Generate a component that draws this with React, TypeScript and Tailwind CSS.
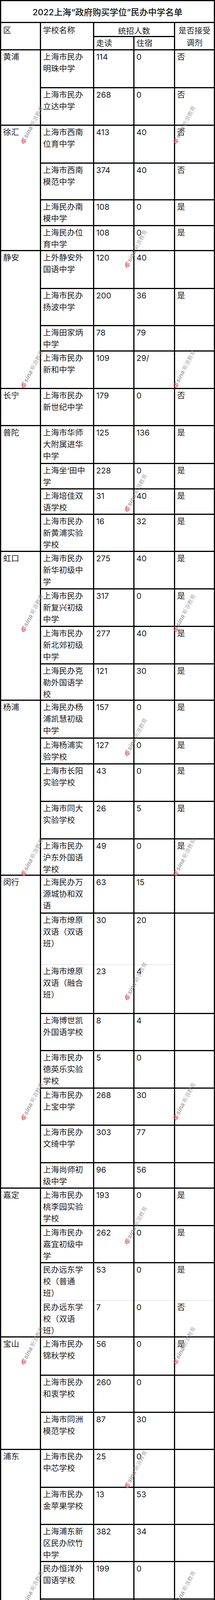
import React from "react";

type Row = { name: string; walk: string; board: string; adj: string; h: number };
type Pair = { pair: [Row, Row]; top: string; merge?: boolean };
type District = { name: string; span: string; rows: (Row | Pair)[] };

const r = (name: string, walk: string, board: string, adj: string, h: number): Row => ({ name, walk, board, adj, h });

const districts: District[] = [
  {
    name: "黄浦",
    span: "row-span-2",
    rows: [r("上海市民办\n明珠中学", "114", "0", "否", 94), r("上海市民办\n立达中学", "268", "0", "否", 93)],
  },
  {
    name: "徐汇",
    span: "row-span-4",
    rows: [
      r("上海市西南\n位育中学", "413", "40", "否", 94),
      r("上海市西南\n模范中学", "374", "40", "否", 91),
      r("上海民办南\n模中学", "108", "0", "是", 63),
      r("上海民办位\n育中学", "108", "0", "是", 61),
    ],
  },
  {
    name: "静安",
    span: "row-span-4",
    rows: [
      r("上外静安外\n国语中学", "120", "40", "", 94),
      r("上海市民办\n扬波中学", "200", "36", "是", 92),
      r("上海田家炳\n中学", "78", "79", "", 62),
      r("上海市民办\n新和中学", "109", "29/", "", 93),
    ],
  },
  { name: "长宁", span: "", rows: [r("上海市民办\n新世纪中学", "179", "0", "否", 92)] },
  {
    name: "普陀",
    span: "row-span-4",
    rows: [
      r("上海市华师\n大附属进华\n中学", "125", "136", "是", 94),
      r("上海坐‘田中\n学", "228", "0", "是", 62),
      r("上海培佳双\n语学校", "31", "40", "是", 62),
      r("上海市民办\n新黄浦实验\n学校", "16", "32", "是", 92),
    ],
  },
  {
    name: "虹口",
    span: "row-span-4",
    rows: [
      r("上海市民办\n新华初级中\n学", "275", "40", "是", 93),
      r("上海市民办\n新复兴初级\n中学", "317", "0", "是", 93),
      r("上海市民办\n新北郊初级\n中学", "277", "40", "是", 93),
      r("上海民办克\n勒外国语学\n校", "121", "30", "是", 90),
    ],
  },
  {
    name: "杨浦",
    span: "row-span-5",
    rows: [
      r("上海民办杨\n浦凯慧初级\n中学", "157", "0", "是", 94),
      r("上海杨浦实\n验学校", "127", "0", "是", 63),
      r("上海市长阳\n实验学校", "43", "0", "是", 93),
      r("上海市同大\n实验学校", "26", "5", "是", 93),
      r("上海市民办\n沪东外国语\n学校", "49", "0", "是", 90),
    ],
  },
  {
    name: "闵行",
    span: "row-span-7",
    rows: [
      r("上海民办万\n源城协和双\n语", "63", "15", "", 94),
      {
        pair: [
          r("上海市燎原\n双语（双语\n班）", "30", "20", "", 130),
          r("上海市燎原\n双语（融合\n班）", "23", "4", "", 124),
        ],
        top: "h-[130px]",
        merge: true,
      },
      r("上海博世凯\n外国语学校", "8", "4", "", 92),
      r("上海市民办\n德英乐实验\n学校", "5", "0", "", 93),
      r("上海市民办\n上宝中学", "268", "30", "", 92),
      r("上海市民办\n文绮中学", "303", "77", "", 93),
      r("上海尚师初\n级中学", "96", "56", "", 62),
    ],
  },
  {
    name: "嘉定",
    span: "row-span-3",
    rows: [
      r("上海市民办\n桃李园实验\n学校", "193", "0", "是", 93),
      r("上海市民办\n嘉宜初级中\n学", "262", "0", "是", 92),
      {
        pair: [
          r("民办远东学\n校（普通\n班）", "53", "0", "是", 95),
          r("民办远东学\n校（双语\n班）", "7", "0", "否", 92),
        ],
        top: "h-[95px]",
      },
    ],
  },
  {
    name: "宝山",
    span: "row-span-3",
    rows: [
      r("上海市民办\n锦秋学校", "56", "0", "是", 95),
      r("上海市民办\n和衷学校", "260", "0", "", 92),
      r("上海市同洲\n模范学校", "87", "30", "", 92),
    ],
  },
  {
    name: "浦东",
    span: "row-span-7",
    rows: [
      r("上海市民办\n中芯学校", "25", "0", "", 94),
      r("上海市民办\n金苹果学校", "13", "53", "", 92),
      r("上海浦东新\n区民办欣竹\n中学", "382", "34", "", 92),
      r("民办恒洋外\n国语学校", "199", "0", "", 93),
      r("上海民办浦\n东交中初级\n中学", "152", "0", "", 92),
      r("民办远翔实\n验学校", "197", "0", "", 61),
      r("民办进德外\n国语中学", "205", "0", "", 93),
    ],
  },
  {
    name: "松江",
    span: "row-span-2",
    rows: [
      r("上海市松江\n九峰实验学\n校", "252", "0", "", 94),
      r("上海市松江\n区民办茸一\n中学", "270", "0", "", 92),
    ],
  },
  {
    name: "金山",
    span: "row-span-3",
    rows: [
      r("上海市民办\n金盟学校", "70", "20", "是", 94),
      r("上海金山区\n健桥实验中\n学", "126", "20", "是", 92),
      r("上海市民办\n永昌中学", "30", "24", "是", 92),
    ],
  },
  {
    name: "青浦",
    span: "row-span-3",
    rows: [
      r("上海复旦五\n浦汇实验学\n校", "120", "52", "是", 94),
      r("上海青浦区\n世外学校", "19", "5", "否", 93),
      r("上海青浦兰\n生学校", "65", "35", "是", 61),
    ],
  },
  { name: "奉贤", span: "", rows: [r("无", "/", "/", "/", 30)] },
  { name: "崇明", span: "", rows: [r("无", "/", "/", "/", 29)] },
];

// row track sizes: title, two header rows, every body row, footnote
const trackList = [
  53,
  33,
  31,
  ...districts.flatMap((d) => d.rows.map((row) => ("pair" in row ? row.pair[0].h + row.pair[1].h : row.h))),
  32,
];
const gridRows = trackList.map((n) => `${n}px`).join(" ");

const cell = "min-h-0 overflow-hidden bg-white pl-[5px] pt-[2px] leading-[30px]";
const sub = "overflow-hidden pl-[5px] pt-[2px] leading-[30px]";

function RowCells({ row }: { row: Row }) {
  return (
    <>
      <div className={`${cell} whitespace-pre`}>{row.name}</div>
      <div className={cell}>{row.walk}</div>
      <div className={cell}>{row.board}</div>
      <div className={cell}>{row.adj}</div>
    </>
  );
}

function PairCells({ p }: { p: Pair }) {
  const [a, b] = p.pair;
  const stack = (pick: (x: Row) => string, pre = false) => (
    <div className="flex min-h-0 flex-col overflow-hidden bg-white">
      <div className={`${sub} ${p.top} shrink-0 ${pre ? "whitespace-pre" : ""}`}>{pick(a)}</div>
      <div className={`${sub} flex-1 border-t border-[#d4d4d4] ${pre ? "whitespace-pre" : ""}`}>{pick(b)}</div>
    </div>
  );
  return (
    <>
      {stack((x) => x.name, true)}
      {stack((x) => x.walk)}
      {stack((x) => x.board)}
      {p.merge ? <div className="bg-white" /> : stack((x) => x.adj)}
    </>
  );
}

function SinaEye() {
  return (
    <svg width="16" height="14" viewBox="0 0 15 13" className="shrink-0">
      <path d="M2 8.5 C2.5 3.5 8 1 13 3" stroke="#e3262f" strokeWidth="2.2" fill="none" strokeLinecap="round" />
      <ellipse cx="7.5" cy="8.5" rx="4.6" ry="3.4" fill="#fff" stroke="#e3262f" strokeWidth="1.6" />
      <circle cx="7.6" cy="8.6" r="1.7" fill="#333" />
    </svg>
  );
}

function Watermark({ x, y }: { x: number; y: number }) {
  return (
    <div
      className="pointer-events-none absolute flex -translate-x-1/2 -translate-y-1/2 rotate-[-62deg] items-center gap-[1px] whitespace-nowrap opacity-70"
      style={{ left: x, top: y }}
    >
      <SinaEye />
      <span className="font-['Liberation_Sans',sans-serif] text-[16px] leading-none font-bold italic text-[#7d7d7d]">sina</span>
      <span className="ml-[2px] text-[14px] leading-none text-[#8f8f8f]">新浪教育</span>
    </div>
  );
}

const sideY = [0, 1, 2, 3, 4, 5, 6, 7].map((k) => 320 + 625 * k);
const midY = [1, 2, 3, 4, 5, 6, 7, 8].map((k) => 12 + 625 * k);

export default function App() {
  return (
    <div className="relative w-[550px] overflow-hidden bg-white font-['Inter','Noto_Sans_CJK_SC',sans-serif] text-[20.5px] text-[#1c1c1c]">
      <div
        className="grid grid-cols-[99px_133px_100px_101px_99px] gap-[3px] bg-black p-[3px]"
        style={{ gridTemplateRows: gridRows }}
      >
        {/* title */}
        <div className="col-span-5 flex items-center justify-center bg-white pt-[4px] text-[22px] font-medium text-[#111]">
          2022上海“政府购买学位”民办中学名单
        </div>

        {/* header */}
        <div className="row-span-2 bg-white pl-[5px] pt-[3px] leading-[31px]">区</div>
        <div className="row-span-2 bg-white pl-[5px] pt-[3px] leading-[31px]">学校名称</div>
        <div className="col-span-2 overflow-hidden bg-white pt-[9px] text-center leading-[24px]">统招人数</div>
        <div className="row-span-2 bg-white pt-[4px] text-center leading-[31px]">
          是否接受
          <br />
          调剂
        </div>
        <div className="overflow-hidden bg-white pl-[5px] leading-[31px]">走读</div>
        <div className="overflow-hidden bg-white pl-[5px] leading-[31px]">住宿</div>

        {districts.map((d) => (
          <React.Fragment key={d.name}>
            <div className={`${cell} ${d.span}`}>{d.name}</div>
            {d.rows.map((row, i) =>
              "pair" in row ? <PairCells key={i} p={row} /> : <RowCells key={i} row={row} />
            )}
          </React.Fragment>
        ))}

        {/* footnote */}
        <div className="col-span-5 flex items-center bg-white pl-[5px]">
          表格空白表示暂未找到相关信息，欢迎补充指正
        </div>
      </div>

      {sideY.map((y) => (
        <React.Fragment key={`s${y}`}>
          <Watermark x={82} y={y} />
          <Watermark x={471} y={y} />
        </React.Fragment>
      ))}
      {midY.map((y) => (
        <Watermark key={`m${y}`} x={347} y={y} />
      ))}
    </div>
  );
}
